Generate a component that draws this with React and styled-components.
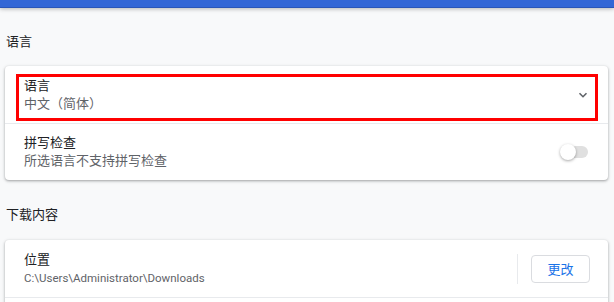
import React from "react";
import styled, { createGlobalStyle } from "styled-components";

const Global = createGlobalStyle`
  html, body { margin: 0; padding: 0; background: #f8f9fa; }
  body {
    font-family: Roboto, "Noto Sans CJK SC", "Liberation Sans", sans-serif;
    font-size: 13px;
    color: #202124;
    width: 614px;
    height: 302px;
    overflow: hidden;
  }
`;

const TopBar = styled.div`
  height: 7px;
  background: #3367d6;
  border-bottom: 1px solid #2a56b8;
  box-shadow: 0 1px 4px rgba(0, 0, 0, 0.28);
  position: relative;
  z-index: 1;
`;

const Main = styled.main`
  padding: 0 6px 0 5px;
`;

const SectionTitle = styled.h2`
  margin: 0;
  padding: ${(p) => (p.$first ? "25px 0 15px 1px" : "26px 0 16px 1px")};
  font-size: 13px;
  font-weight: 400;
  line-height: 18px;
  color: #202124;
`;

const Card = styled.section`
  background: #fff;
  border-radius: 4px;
  box-shadow: 0 1px 2px rgba(60, 64, 67, 0.3), 0 1px 3px 1px rgba(60, 64, 67, 0.15);
`;

const Row = styled.div`
  position: relative;
  display: flex;
  align-items: center;
  min-height: 57px;
  padding: 0 19px 0 19px;
  box-sizing: border-box;
  border-top: ${(p) => (p.$divider ? "1px solid #e8eaed" : "none")};
`;

const Texts = styled.div`
  flex: 1;
  display: flex;
  flex-direction: column;
  line-height: 18px;
`;

const Primary = styled.div`
  color: #202124;
`;

const Secondary = styled.div`
  color: #5f6368;
  font-size: ${(p) => (p.$path ? "11.5px" : "13px")};
`;

const Highlight = styled.div`
  position: absolute;
  top: 8px;
  bottom: 2px;
  left: 11px;
  right: 10px;
  border: 3px solid #ff0000;
  pointer-events: none;
`;

const Chevron = styled.svg`
  width: 10px;
  height: 10px;
  margin-right: 1px;
  flex: none;
`;

const Toggle = styled.div`
  position: relative;
  width: 28px;
  height: 16px;
  flex: none;
  margin-right: 1px;
`;

const Track = styled.div`
  position: absolute;
  left: 2px;
  right: 0;
  top: 2px;
  height: 12px;
  border-radius: 6px;
  background: #e0e0e0;
`;

const Knob = styled.div`
  position: absolute;
  left: 0;
  top: 0;
  width: 16px;
  height: 16px;
  border-radius: 50%;
  background: #fff;
  box-shadow: 0 1px 3px rgba(0, 0, 0, 0.35);
`;

const Separator = styled.div`
  width: 1px;
  height: 30px;
  background: #e8eaed;
  margin: 0 13px 0 0;
  flex: none;
`;

const Button = styled.button`
  width: 59px;
  height: 28px;
  flex: none;
  border: 1px solid #dadce0;
  border-radius: 4px;
  background: #fff;
  color: #1a73e8;
  font: inherit;
  font-size: 13px;
  padding: 0;
  margin-right: -1px;
  cursor: pointer;
`;

export default function App() {
  return (
    <>
      <Global />
      <TopBar />
      <Main>
        <SectionTitle $first>语言</SectionTitle>
        <Card>
          <Row>
            <Highlight />
            <Texts>
              <Primary>语言</Primary>
              <Secondary>中文（简体）</Secondary>
            </Texts>
            <Chevron viewBox="0 0 10 10">
              <path d="M1.5 3.2 L5 6.7 L8.5 3.2" fill="none" stroke="#5f6368" strokeWidth="1.6" />
            </Chevron>
          </Row>
          <Row $divider>
            <Texts>
              <Primary>拼写检查</Primary>
              <Secondary>所选语言不支持拼写检查</Secondary>
            </Texts>
            <Toggle>
              <Track />
              <Knob />
            </Toggle>
          </Row>
        </Card>
        <SectionTitle>下载内容</SectionTitle>
        <Card>
          <Row>
            <Texts>
              <Primary>位置</Primary>
              <Secondary $path>C:\Users\Administrator\Downloads</Secondary>
            </Texts>
            <Separator />
            <Button>更改</Button>
          </Row>
          <Row $divider />
        </Card>
      </Main>
    </>
  );
}
